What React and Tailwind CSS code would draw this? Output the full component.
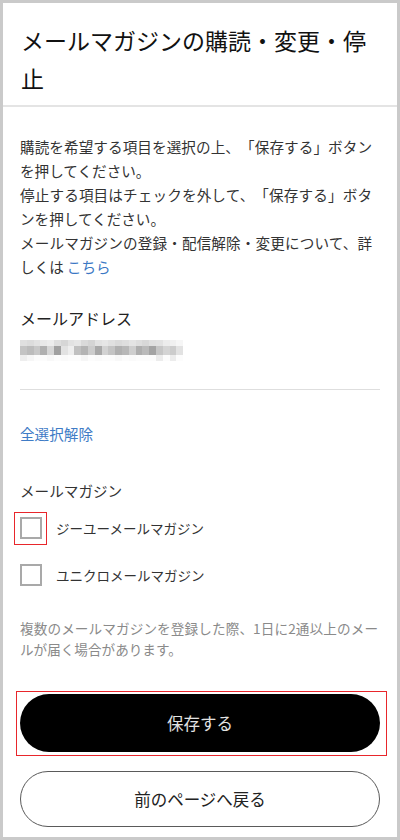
import React from "react";

const font = { fontFamily: '"Noto Sans CJK JP", "Noto Sans", sans-serif' };

// モザイク処理されたメールアドレス（ピクセルごとのグレー値）
const blurRows = [
  { h: 6, cells: [224, 220, 226, 232, 236, 222, 214, 226, 230, 218, 212, 226, 230, 224, 218, 222, 228, 222, 216, 224, 226, 236, 240, 246] },
  { h: 9, cells: [196, 188, 200, 176, 214, 160, 226, 238, 192, 180, 204, 168, 210, 196, 176, 184, 206, 174, 186, 164, 198, 212, 204, 226] },
  { h: 6, cells: [238, 246, 252, 252, 248, 252, 250, 252, 252, 246, 252, 250, 252, 252, 248, 252, 250, 252, 252, 252, 236, 252, 236, 252] },
];

// 折り返し位置を固定した本文の行（full は行幅いっぱいに揃える）
const Line = ({ children, full = false }) => (
  <div className={full ? "w-[352px] whitespace-nowrap text-justify [text-align-last:justify]" : "whitespace-nowrap"}>
    {children}
  </div>
);

const Checkbox = ({ label, highlight = false }) => (
  <label className="flex items-center h-[22px]">
    <span className="relative w-[22px] h-[22px] shrink-0">
      <span className="block w-full h-full border-2 border-[#a9a9a9] bg-white"></span>
      {highlight && (
        <span className="absolute -left-[6px] -top-[5px] w-[33px] h-[33px] border-[1.5px] border-[#e8262b]"></span>
      )}
    </span>
    <span className="ml-[14px] text-[13.5px] text-[#333] leading-[22px]">{label}</span>
  </label>
);

export default function App() {
  return (
    <div
      lang="ja"
      className="w-[400px] h-[840px] bg-white border-[3px] border-[#cacaca] overflow-hidden [text-spacing-trim:space-all]"
      style={font}
    >
      <header className="pl-[18px] pr-[14px] pt-[18px] pb-[8px] border-b-2 border-[#e4e4e4]">
        <h1 className="text-[23px] leading-[38px] text-[#111] font-normal">
          メールマガジンの購読・変更・停止
        </h1>
      </header>

      <main className="px-[17px] pt-[28px]">
        <div className="text-[14.6px] leading-[24px] text-[#333]">
          <Line full>購読を希望する項目を選択の上、「保存する」ボタン</Line>
          <Line>を押してください。</Line>
          <Line full>停止する項目はチェックを外して、「保存する」ボタ</Line>
          <Line>ンを押してください。</Line>
          <Line full>メールマガジンの登録・配信解除・変更について、詳</Line>
          <Line>
            しくは<a className="ml-[3px] text-[#3b78c4]">こちら</a>
          </Line>
        </div>

        <div className="mt-[27px] text-[16px] leading-[24px] text-[#222]">メールアドレス</div>
        <div className="mt-[10px] flex flex-col w-[163px]">
          {blurRows.map((row, r) => (
            <div key={r} className="flex">
              {row.cells.map((g, i) => (
                <span
                  key={i}
                  className="block flex-1"
                  style={{ height: row.h, backgroundColor: `rgb(${g},${g},${g})` }}
                ></span>
              ))}
            </div>
          ))}
        </div>

        <div className="mt-[28px] h-px bg-[#dedede]"></div>

        <div className="mt-[33px] text-[14.6px] leading-[22px] text-[#3f7cc6]">全選択解除</div>

        <div className="mt-[35px] text-[14.6px] leading-[22px] text-[#333]">メールマガジン</div>

        <div className="mt-[15px] flex flex-col gap-[25px]">
          <Checkbox label="ジーユーメールマガジン" highlight />
          <Checkbox label="ユニクロメールマガジン" />
        </div>

        <div className="mt-[32px] text-[13.6px] leading-[21px] text-[#8a8a8a]">
          <div className="w-[358px] whitespace-nowrap text-justify [text-align-last:justify]">
            複数のメールマガジンを登録した際、1日に2通以上のメー
          </div>
          <div className="whitespace-nowrap">ルが届く場合があります。</div>
        </div>

        <div className="relative mt-[34px]">
          <button className="w-full h-[58px] rounded-full bg-black text-[#e2e2e2] text-[16.5px] flex items-center justify-center">
            保存する
          </button>
          <span className="absolute -left-[4px] -top-[3px] -right-[7px] -bottom-[4px] border-[1.5px] border-[#e8262b] pointer-events-none"></span>
        </div>

        <button className="mt-[19px] w-full h-[56px] rounded-full bg-white border-[1.5px] border-[#5a5a5a] text-[#222] text-[16.5px] flex items-center justify-center">
          前のページへ戻る
        </button>
      </main>
    </div>
  );
}
